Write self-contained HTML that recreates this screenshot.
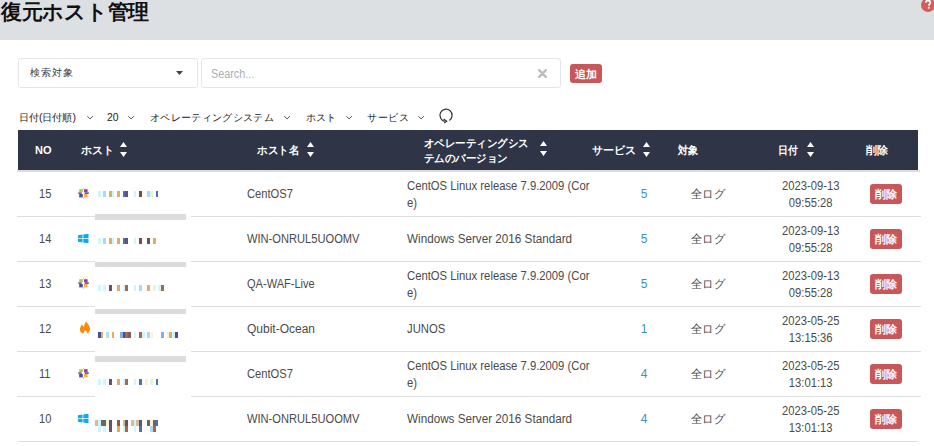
<!DOCTYPE html>
<html lang="ja"><head><meta charset="utf-8">
<style>
*{box-sizing:border-box;margin:0;padding:0}
html,body{width:934px;height:446px;overflow:hidden;background:#fff}
body{position:relative;font-family:"Liberation Sans",sans-serif;color:#444;font-size:12px}
.a{position:absolute;white-space:nowrap;transform-origin:0 0}
#top{left:0;top:0;width:934px;height:40px;background:#dde0e3}
#title{left:1px;top:0px;font-size:21px;line-height:24px;color:#111;letter-spacing:-0.3px;font-weight:bold}
.box{border:1px solid #e3e5e8;border-radius:3px;background:#fff}
.btn{background:#c9575a;color:#fff;border-radius:3px;font-weight:bold;text-align:center}
#thead{left:18px;top:130px;width:900px;height:40px;background:#2f3447}
#tshadow{left:17px;top:170px;width:903px;height:2px;background:#dcdcdc}
.th{color:#fff;font-weight:bold;font-size:11px;line-height:14px}
.line{left:18px;width:900px;height:1px;background:#dedede}
.td{color:#4a4a4a;font-size:12px;line-height:16px}
.sr{font-size:10.4px;line-height:14px;color:#222;top:111px}
.wb{background:#fff;left:95px;width:96px}
.gb{background:#dcdcdc;left:95px;width:91px}
.px{height:6px;width:3px}
</style></head><body>
<div class="a" id="top"></div>
<div class="a" id="title">復元ホスト管理</div>
<svg class="a" style="left:918px;top:-3px" width="16" height="16" viewBox="0 0 16 16"><circle cx="10" cy="8" r="7" fill="#d65b5b"/><path d="M7.6 5.6C7.8 4.2 8.8 3.6 10 3.6C11.4 3.6 12.4 4.4 12.4 5.6C12.4 7 10.9 7.2 10.8 8.6" fill="none" stroke="#fff" stroke-width="1.8"/><rect x="9.9" y="9.8" width="1.8" height="1.8" fill="#fff"/></svg>

<!-- filter row -->
<div class="a box" style="left:18px;top:58px;width:180px;height:30px"></div>
<div class="a" style="left:30px;top:66px;font-size:10px;line-height:14px;color:#3a3a3a;letter-spacing:1px">検索対象</div>
<svg class="a" style="left:176px;top:71px" width="8" height="5" viewBox="0 0 8 5"><path d="M0 0H7L3.5 4Z" fill="#444"/></svg>
<div class="a box" style="left:201px;top:58px;width:360px;height:30px"></div>
<div class="a" style="left:211px;top:67px;font-size:12px;line-height:14px;color:#aab0b8;transform:scaleX(0.9)">Search...</div>
<svg class="a" style="left:538px;top:69px" width="9" height="9" viewBox="0 0 9 9"><path d="M1.2 1.2L7.8 7.8M7.8 1.2L1.2 7.8" stroke="#bdbdbd" stroke-width="2.4" stroke-linecap="round"/></svg>
<div class="a btn" style="left:570px;top:64px;width:32px;height:19px;font-size:11px;line-height:20px">追加</div>

<!-- sort row -->
<div class="a sr" style="left:19px">日付(日付順)</div>
<div class="a sr" style="left:107px">20</div>
<div class="a sr" style="left:150px;letter-spacing:0.33px">オペレーティングシステム</div>
<div class="a sr" style="left:306px">ホスト</div>
<div class="a sr" style="left:367px;letter-spacing:0.5px">サービス</div>
<svg class="a" style="left:0;top:0" width="934" height="130">
<g fill="none" stroke="#555" stroke-width="1">
<path d="M87.3 116.2l2.8 2.7l2.8-2.7"/>
<path d="M128.3 116.2l2.8 2.7l2.8-2.7"/>
<path d="M284.3 116.2l2.8 2.7l2.8-2.7"/>
<path d="M346.3 116.2l2.8 2.7l2.8-2.7"/>
<path d="M418.3 116.2l2.8 2.7l2.8-2.7"/>
</g>
<path d="M449.4 120.4A6.1 6.1 0 1 0 444.8 121.3" fill="none" stroke="#333" stroke-width="1.2"/>
<path d="M443.6 118.9L446.7 121.2L444.3 123" fill="none" stroke="#333" stroke-width="1.2"/>
</svg>

<!-- table header -->
<div class="a" id="thead"></div>
<div class="a" id="tshadow"></div>
<div class="a th" style="left:35px;top:143px">NO</div>
<div class="a th" style="left:81px;top:143px">ホスト</div>
<div class="a th" style="left:257px;top:143px;transform:scaleX(0.96)">ホスト名</div>
<div class="a th" style="left:424px;top:136px;line-height:15px;transform:scaleX(0.95)">オペレーティングシス<br>テムのバージョン</div>
<div class="a th" style="left:592px;top:143px">サービス</div>
<div class="a th" style="left:678px;top:143px;transform:scaleX(0.91)">対象</div>
<div class="a th" style="left:778px;top:143px;transform:scaleX(0.9)">日付</div>
<div class="a th" style="left:866px;top:143px">削除</div>
<svg class="a" style="left:0;top:130px" width="934" height="40">
<g fill="#fff">
<path id="s" d="M120 17L123.5 12L127 17Z M120 22L127 22L123.5 27Z"/>
<use href="#s" x="187"/>
<use href="#s" x="420" y="-1"/>
<use href="#s" x="523"/>
<use href="#s" x="687"/>
</g>
</svg>

<div class="a line" style="top:216px;left:17px;width:904px"></div>
<div class="a td" style="left:39px;top:186px;transform:scaleX(0.92)">15</div>
<svg class="a" style="left:78px;top:188px" width="11" height="11" viewBox="0 0 11 11"><rect x="1.2" y="1.2" width="3.6" height="3" fill="#9ad43a"/><rect x="6" y="1.2" width="3.6" height="3" fill="#b0309a"/><rect x="1.2" y="6" width="3.6" height="3.4" fill="#4a4aa0"/><rect x="6" y="6" width="3.6" height="3.4" fill="#f5b040"/><path d="M4.6 1.3L5.5 -0.2L6.4 1.3Z" fill="#f5b040"/><path d="M4.6 9.4L5.5 10.9L6.4 9.4Z" fill="#9ad43a"/><rect x="0.2" y="4.4" width="3.6" height="1.4" fill="#9a2a9a"/><rect x="6.6" y="4.4" width="4.2" height="1.4" fill="#3a3a9a"/></svg>
<div class="a td" style="left:247px;top:186px;transform:scaleX(0.93)">CentOS7</div>
<div class="a td" style="left:407px;top:178px;line-height:17px;transform:scaleX(0.94)">CentOS Linux release 7.9.2009 (Cor<br>e)</div>
<div class="a td" style="left:634px;top:186px;width:20px;text-align:center;color:#3a92bd">5</div>
<div class="a td" style="left:691px;top:186px;transform:scaleX(0.94)">全ログ</div>
<div class="a td" style="left:771px;top:178px;width:80px;text-align:center;line-height:17px"><span style="display:inline-block;transform:scaleX(0.935)">2023-09-13<br>09:55:28</span></div>
<div class="a btn" style="left:870px;top:184px;width:32px;height:20px;font-size:11px;line-height:21px">削除</div>
<div class="a px" style="left:98px;top:191px;width:3px;background:#cdf7fc"></div>
<div class="a px" style="left:103px;top:191px;width:3px;background:#a6daf8"></div>
<div class="a px" style="left:109px;top:191px;width:3px;background:#e2aa68"></div>
<div class="a px" style="left:112px;top:191px;width:2px;background:#cdf7fc"></div>
<div class="a px" style="left:117px;top:191px;width:3px;background:#e2aa68"></div>
<div class="a px" style="left:123px;top:191px;width:2px;background:#4a70b8"></div>
<div class="a px" style="left:125px;top:191px;width:3px;background:#6a5070"></div>
<div class="a px" style="left:134px;top:191px;width:2px;background:#cdf7fc"></div>
<div class="a px" style="left:139px;top:191px;width:3px;background:#7a4a4a"></div>
<div class="a px" style="left:147px;top:191px;width:3px;background:#a6daf8"></div>
<div class="a px" style="left:150px;top:191px;width:3px;background:#ddf8df"></div>
<div class="a px" style="left:156px;top:191px;width:2px;background:#4a70b8"></div>
<div class="a line" style="top:261px;left:17px;width:904px"></div>
<div class="a td" style="left:39px;top:231px;transform:scaleX(0.92)">14</div>
<svg class="a" style="left:78px;top:234px" width="11" height="9" viewBox="0 0 11 9"><path d="M0 1.3L4.5 0.6V4.2H0Z M5.3 0.5L10.5 -0.3V4.2H5.3Z M0 4.9H4.5V8.4L0 7.7Z M5.3 4.9H10.5V9.3L5.3 8.5Z" fill="#0ea8ee"/></svg>
<div class="a td" style="left:247px;top:231px;transform:scaleX(0.927)">WIN-ONRUL5UOOMV</div>
<div class="a td" style="left:407px;top:231px;transform:scaleX(0.974)">Windows Server 2016 Standard</div>
<div class="a td" style="left:634px;top:231px;width:20px;text-align:center;color:#3a92bd">5</div>
<div class="a td" style="left:691px;top:231px;transform:scaleX(0.94)">全ログ</div>
<div class="a td" style="left:771px;top:223px;width:80px;text-align:center;line-height:17px"><span style="display:inline-block;transform:scaleX(0.935)">2023-09-13<br>09:55:28</span></div>
<div class="a btn" style="left:870px;top:229px;width:32px;height:20px;font-size:11px;line-height:21px">削除</div>
<div class="a px" style="left:98px;top:238px;width:3px;background:#cdf7fc"></div>
<div class="a px" style="left:103px;top:238px;width:3px;background:#a6daf8"></div>
<div class="a px" style="left:109px;top:238px;width:3px;background:#e2aa68"></div>
<div class="a px" style="left:112px;top:238px;width:2px;background:#cdf7fc"></div>
<div class="a px" style="left:117px;top:238px;width:3px;background:#e2aa68"></div>
<div class="a px" style="left:123px;top:238px;width:2px;background:#4a70b8"></div>
<div class="a px" style="left:125px;top:238px;width:3px;background:#6a5070"></div>
<div class="a px" style="left:134px;top:238px;width:2px;background:#cdf7fc"></div>
<div class="a px" style="left:139px;top:238px;width:3px;background:#7a4a4a"></div>
<div class="a px" style="left:147px;top:238px;width:3px;background:#5a5850"></div>
<div class="a px" style="left:153px;top:238px;width:3px;background:#e2aa68"></div>
<div class="a line" style="top:306px;left:17px;width:904px"></div>
<div class="a td" style="left:39px;top:276px;transform:scaleX(0.92)">13</div>
<svg class="a" style="left:78px;top:278px" width="11" height="11" viewBox="0 0 11 11"><rect x="1.2" y="1.2" width="3.6" height="3" fill="#9ad43a"/><rect x="6" y="1.2" width="3.6" height="3" fill="#b0309a"/><rect x="1.2" y="6" width="3.6" height="3.4" fill="#4a4aa0"/><rect x="6" y="6" width="3.6" height="3.4" fill="#f5b040"/><path d="M4.6 1.3L5.5 -0.2L6.4 1.3Z" fill="#f5b040"/><path d="M4.6 9.4L5.5 10.9L6.4 9.4Z" fill="#9ad43a"/><rect x="0.2" y="4.4" width="3.6" height="1.4" fill="#9a2a9a"/><rect x="6.6" y="4.4" width="4.2" height="1.4" fill="#3a3a9a"/></svg>
<div class="a td" style="left:247px;top:276px;transform:scaleX(0.92)">QA-WAF-Live</div>
<div class="a td" style="left:407px;top:268px;line-height:17px;transform:scaleX(0.94)">CentOS Linux release 7.9.2009 (Cor<br>e)</div>
<div class="a td" style="left:634px;top:276px;width:20px;text-align:center;color:#3a92bd">5</div>
<div class="a td" style="left:691px;top:276px;transform:scaleX(0.94)">全ログ</div>
<div class="a td" style="left:771px;top:268px;width:80px;text-align:center;line-height:17px"><span style="display:inline-block;transform:scaleX(0.935)">2023-09-13<br>09:55:28</span></div>
<div class="a btn" style="left:870px;top:274px;width:32px;height:20px;font-size:11px;line-height:21px">削除</div>
<div class="a px" style="left:98px;top:285px;width:3px;background:#cdf7fc"></div>
<div class="a px" style="left:103px;top:285px;width:3px;background:#cdf7fc"></div>
<div class="a px" style="left:109px;top:285px;width:3px;background:#6a5070"></div>
<div class="a px" style="left:117px;top:285px;width:3px;background:#e2aa68"></div>
<div class="a px" style="left:123px;top:285px;width:2px;background:#cdf7fc"></div>
<div class="a px" style="left:125px;top:285px;width:3px;background:#a86848"></div>
<div class="a px" style="left:134px;top:285px;width:2px;background:#cdf7fc"></div>
<div class="a px" style="left:139px;top:285px;width:3px;background:#a6daf8"></div>
<div class="a px" style="left:147px;top:285px;width:3px;background:#e2aa68"></div>
<div class="a px" style="left:153px;top:285px;width:3px;background:#fcf0cf"></div>
<div class="a px" style="left:158px;top:285px;width:3px;background:#cdf7fc"></div>
<div class="a px" style="left:161px;top:285px;width:3px;background:#a86848"></div>
<div class="a line" style="top:351px;left:17px;width:904px"></div>
<div class="a td" style="left:39px;top:321px;transform:scaleX(0.92)">12</div>
<svg class="a" style="left:78.5px;top:321px" width="12" height="13" viewBox="0 0 12 13"><path d="M7 0.6C8 2.2 10.3 4 10.9 7C11.4 9.8 10.3 12 8.2 12.4C8.4 11 7.6 10 6.3 9.3C5.4 10 4.6 11 4.6 12.4C2.2 12 0.9 10.5 0.9 8.4C0.9 6.4 2 5 3 3.2C3.4 4.5 4 5.2 5 5.8C5.2 3.8 5.9 2.2 7 0.6Z" fill="#ff8a0a"/></svg>
<div class="a td" style="left:247px;top:321px;transform:scaleX(1.0)">Qubit-Ocean</div>
<div class="a td" style="left:407px;top:321px;transform:scaleX(0.94)">JUNOS</div>
<div class="a td" style="left:634px;top:321px;width:20px;text-align:center;color:#3a92bd">1</div>
<div class="a td" style="left:691px;top:321px;transform:scaleX(0.94)">全ログ</div>
<div class="a td" style="left:771px;top:313px;width:80px;text-align:center;line-height:17px"><span style="display:inline-block;transform:scaleX(0.935)">2023-05-25<br>13:15:36</span></div>
<div class="a btn" style="left:870px;top:319px;width:32px;height:20px;font-size:11px;line-height:21px">削除</div>
<div class="a px" style="left:98px;top:332px;width:3px;background:#4a4e98"></div>
<div class="a px" style="left:101px;top:332px;width:2px;background:#e2aa68"></div>
<div class="a px" style="left:106px;top:332px;width:3px;background:#b0e8d0"></div>
<div class="a px" style="left:112px;top:332px;width:2px;background:#e2aa68"></div>
<div class="a px" style="left:120px;top:332px;width:3px;background:#78b4e6"></div>
<div class="a px" style="left:123px;top:332px;width:2px;background:#4a4e98"></div>
<div class="a px" style="left:125px;top:332px;width:3px;background:#a86848"></div>
<div class="a px" style="left:128px;top:332px;width:3px;background:#8a5a50"></div>
<div class="a px" style="left:134px;top:332px;width:2px;background:#cdf7fc"></div>
<div class="a px" style="left:139px;top:332px;width:3px;background:#a86848"></div>
<div class="a px" style="left:142px;top:332px;width:3px;background:#cdf7fc"></div>
<div class="a px" style="left:147px;top:332px;width:3px;background:#a6daf8"></div>
<div class="a px" style="left:151px;top:332px;width:2px;background:#fcf0cf"></div>
<div class="a px" style="left:161px;top:332px;width:3px;background:#78b4e6"></div>
<div class="a px" style="left:167px;top:332px;width:2px;background:#fcf0cf"></div>
<div class="a px" style="left:169px;top:332px;width:3px;background:#e2aa68"></div>
<div class="a px" style="left:172px;top:332px;width:3px;background:#cdf7fc"></div>
<div class="a px" style="left:175px;top:332px;width:3px;background:#4a4e98"></div>
<div class="a line" style="top:396px;left:17px;width:904px"></div>
<div class="a td" style="left:39px;top:366px;transform:scaleX(0.92)">11</div>
<svg class="a" style="left:78px;top:368px" width="11" height="11" viewBox="0 0 11 11"><rect x="1.2" y="1.2" width="3.6" height="3" fill="#9ad43a"/><rect x="6" y="1.2" width="3.6" height="3" fill="#b0309a"/><rect x="1.2" y="6" width="3.6" height="3.4" fill="#4a4aa0"/><rect x="6" y="6" width="3.6" height="3.4" fill="#f5b040"/><path d="M4.6 1.3L5.5 -0.2L6.4 1.3Z" fill="#f5b040"/><path d="M4.6 9.4L5.5 10.9L6.4 9.4Z" fill="#9ad43a"/><rect x="0.2" y="4.4" width="3.6" height="1.4" fill="#9a2a9a"/><rect x="6.6" y="4.4" width="4.2" height="1.4" fill="#3a3a9a"/></svg>
<div class="a td" style="left:247px;top:366px;transform:scaleX(0.93)">CentOS7</div>
<div class="a td" style="left:407px;top:358px;line-height:17px;transform:scaleX(0.94)">CentOS Linux release 7.9.2009 (Cor<br>e)</div>
<div class="a td" style="left:634px;top:366px;width:20px;text-align:center;color:#3a92bd">4</div>
<div class="a td" style="left:691px;top:366px;transform:scaleX(0.94)">全ログ</div>
<div class="a td" style="left:771px;top:358px;width:80px;text-align:center;line-height:17px"><span style="display:inline-block;transform:scaleX(0.935)">2023-05-25<br>13:01:13</span></div>
<div class="a btn" style="left:870px;top:364px;width:32px;height:20px;font-size:11px;line-height:21px">削除</div>
<div class="a px" style="left:98px;top:379px;width:3px;background:#cdf7fc"></div>
<div class="a px" style="left:103px;top:379px;width:3px;background:#cdf7fc"></div>
<div class="a px" style="left:109px;top:379px;width:3px;background:#6a5070"></div>
<div class="a px" style="left:117px;top:379px;width:3px;background:#e2aa68"></div>
<div class="a px" style="left:123px;top:379px;width:2px;background:#cdf7fc"></div>
<div class="a px" style="left:125px;top:379px;width:3px;background:#a86848"></div>
<div class="a px" style="left:134px;top:379px;width:2px;background:#cdf7fc"></div>
<div class="a px" style="left:139px;top:379px;width:3px;background:#4a70b8"></div>
<div class="a px" style="left:145px;top:379px;width:3px;background:#fcf0cf"></div>
<div class="a px" style="left:150px;top:379px;width:3px;background:#ddf8df"></div>
<div class="a px" style="left:156px;top:379px;width:2px;background:#4a70b8"></div>
<div class="a line" style="top:441px;left:18px;width:900px"></div>
<div class="a td" style="left:39px;top:411px;transform:scaleX(0.92)">10</div>
<svg class="a" style="left:78px;top:414px" width="11" height="9" viewBox="0 0 11 9"><path d="M0 1.3L4.5 0.6V4.2H0Z M5.3 0.5L10.5 -0.3V4.2H5.3Z M0 4.9H4.5V8.4L0 7.7Z M5.3 4.9H10.5V9.3L5.3 8.5Z" fill="#0ea8ee"/></svg>
<div class="a td" style="left:247px;top:411px;transform:scaleX(0.927)">WIN-ONRUL5UOOMV</div>
<div class="a td" style="left:407px;top:411px;transform:scaleX(0.974)">Windows Server 2016 Standard</div>
<div class="a td" style="left:634px;top:411px;width:20px;text-align:center;color:#3a92bd">4</div>
<div class="a td" style="left:691px;top:411px;transform:scaleX(0.94)">全ログ</div>
<div class="a td" style="left:771px;top:403px;width:80px;text-align:center;line-height:17px"><span style="display:inline-block;transform:scaleX(0.935)">2023-05-25<br>13:01:13</span></div>
<div class="a btn" style="left:870px;top:409px;width:32px;height:20px;font-size:11px;line-height:21px">削除</div>
<div class="a px" style="left:95px;top:420px;width:3px;background:#dcb898"></div>
<div class="a px" style="left:98px;top:420px;width:3px;background:#cdf7fc"></div>
<div class="a px" style="left:101px;top:420px;width:5px;background:#6a6660"></div>
<div class="a px" style="left:106px;top:420px;width:3px;background:#fcf0cf"></div>
<div class="a px" style="left:109px;top:420px;width:3px;background:#505878"></div>
<div class="a px" style="left:117px;top:420px;width:3px;background:#8a5a50"></div>
<div class="a px" style="left:123px;top:420px;width:2px;background:#dcb898"></div>
<div class="a px" style="left:125px;top:420px;width:3px;background:#505878"></div>
<div class="a px" style="left:131px;top:420px;width:3px;background:#dcb898"></div>
<div class="a px" style="left:134px;top:420px;width:2px;background:#cdf7fc"></div>
<div class="a px" style="left:136px;top:420px;width:3px;background:#dcb898"></div>
<div class="a px" style="left:139px;top:420px;width:3px;background:#505878"></div>
<div class="a px" style="left:147px;top:420px;width:3px;background:#6a6660"></div>
<div class="a px" style="left:150px;top:420px;width:3px;background:#fcf0cf"></div>
<div class="a px" style="left:153px;top:420px;width:3px;background:#6a6660"></div>
<div class="a px" style="left:156px;top:420px;width:2px;background:#4a70b8"></div>
<div class="a px" style="left:98px;top:426px;width:3px;background:#cdf7fc"></div>
<div class="a px" style="left:103px;top:426px;width:3px;background:#cdf7fc"></div>
<div class="a px" style="left:109px;top:426px;width:3px;background:#6a5070"></div>
<div class="a px" style="left:117px;top:426px;width:3px;background:#e2aa68"></div>
<div class="a px" style="left:123px;top:426px;width:2px;background:#cdf7fc"></div>
<div class="a px" style="left:125px;top:426px;width:3px;background:#a86848"></div>
<div class="a px" style="left:134px;top:426px;width:2px;background:#cdf7fc"></div>
<div class="a px" style="left:139px;top:426px;width:3px;background:#4a70b8"></div>
<div class="a px" style="left:150px;top:426px;width:3px;background:#a6daf8"></div>
<div class="a px" style="left:153px;top:426px;width:3px;background:#a86848"></div>
<div class="a wb" style="top:216px;height:1px"></div>
<div class="a wb" style="top:261px;height:1px"></div>
<div class="a wb" style="top:306px;height:1px"></div>
<div class="a wb" style="top:351px;height:1px"></div>
<div class="a wb" style="top:396px;height:1px"></div>
<div class="a gb" style="top:214px;height:6px"></div>
<div class="a gb" style="top:262px;height:5px"></div>
<div class="a gb" style="top:309px;height:5px"></div>
<div class="a gb" style="top:356px;height:6px"></div>
</body></html>
